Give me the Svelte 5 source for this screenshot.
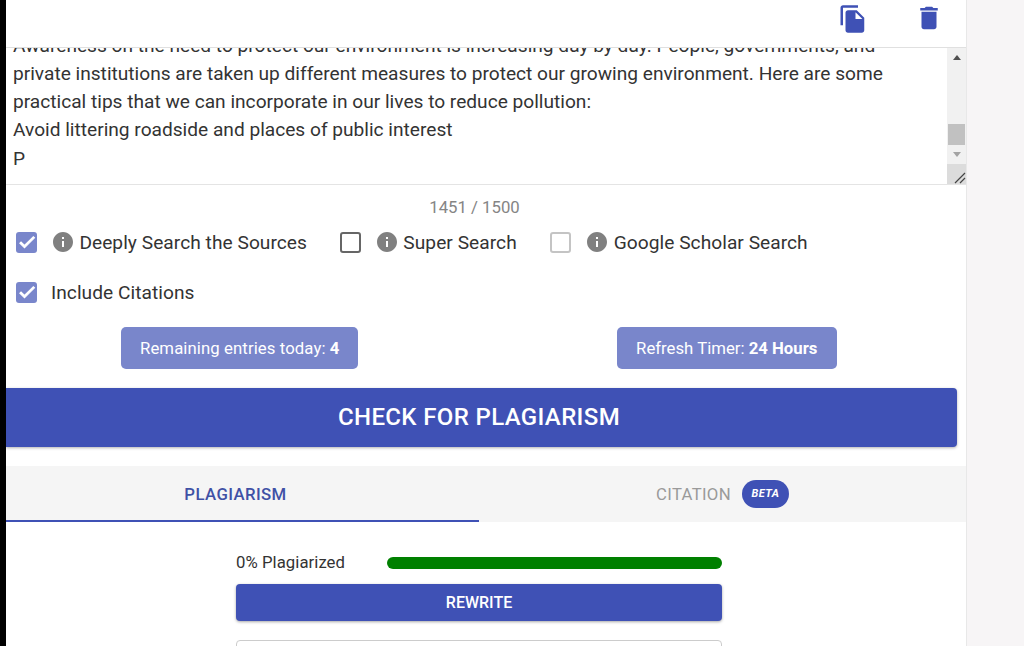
<script>
	const options = [
		{ label: 'Deeply Search the Sources', state: 'checked', gap: 33 },
		{ label: 'Super Search', state: 'empty', gap: 33.6 },
		{ label: 'Google Scholar Search', state: 'disabled', gap: 0 }
	];
	const lines = [
		'Awareness on the need to protect our environment is increasing day by day. People, governments, and',
		'private institutions are taken up different measures to protect our growing environment. Here are some',
		'practical tips that we can incorporate in our lives to reduce pollution:',
		'Avoid littering roadside and places of public interest',
		'P'
	];
</script>

{#snippet checkbox(state)}
	<span class="box {state}">
		{#if state === 'checked'}
			<svg viewBox="0 0 24 24" width="20" height="20"><path d="M9 16.17 4.83 12l-1.42 1.41L9 19 21 7l-1.41-1.41z" fill="#fff" stroke="#fff" stroke-width="1.3" /></svg>
		{/if}
	</span>
{/snippet}

<div class="page">
	<div class="rail"></div>
	<main class="panel">
		<header class="toolbar">
			<button class="icon copy" aria-label="Copy">
				<svg viewBox="0 0 24 24" width="30" height="30"><path d="M16 1H4c-1.1 0-2 .9-2 2v14h2V3h12V1zm-1 4l6 6v10c0 1.1-.9 2-2 2H7.99C6.89 23 6 22.1 6 21l.01-14c0-1.1.89-2 1.99-2h7zm-1 7h5.5L14 6.5V12z" /></svg>
			</button>
			<button class="icon trash" aria-label="Delete">
				<svg viewBox="0 0 24 24" width="30" height="30"><path d="M6 19c0 1.1.9 2 2 2h8c1.1 0 2-.9 2-2V7H6v12zM19 4h-3.5l-1-1h-5l-1 1H5v2h14V4z" /></svg>
			</button>
		</header>

		<div class="editor">
			<div class="text">
				{#each lines as line}
					<p>{line}</p>
				{/each}
			</div>
			<div class="scrollbar">
				<span class="arrow up"></span>
				<span class="thumb"></span>
				<span class="arrow down"></span>
				<span class="resizer">
					<svg viewBox="0 0 12 12" width="12" height="12"><path d="M1 11 11 1M6 11l5-5" stroke="#444" stroke-width="1.2" fill="none" /></svg>
				</span>
			</div>
		</div>

		<div class="counter">1451 / 1500</div>

		<div class="options">
			{#each options as opt}
				<label class="option" style="margin-right: {opt.gap}px">
					{@render checkbox(opt.state)}
					<svg class="info" viewBox="0 0 24 24" width="24" height="24"><path d="M12 2C6.48 2 2 6.48 2 12s4.48 10 10 10 10-4.48 10-10S17.52 2 12 2zm1 15h-2v-6h2v6zm0-8h-2V7h2v2z" /></svg>
					<span class="label">{opt.label}</span>
				</label>
			{/each}
		</div>
		<div class="options second">
			<label class="option">
				{@render checkbox('checked')}
				<span class="label plain">Include Citations</span>
			</label>
		</div>

		<div class="limits">
			<div class="chip first">Remaining entries today: <b>4</b></div>
			<div class="chip last">Refresh Timer: <b>24 Hours</b></div>
		</div>

		<button class="check">CHECK FOR PLAGIARISM</button>

		<nav class="tabs">
			<div class="tab active">PLAGIARISM</div>
			<div class="tab">CITATION <span class="beta">BETA</span></div>
		</nav>

		<section class="result">
			<div class="score">
				<span>0% Plagiarized</span>
				<div class="bar"></div>
			</div>
			<button class="rewrite">REWRITE</button>
			<div class="output"></div>
		</section>
	</main>
</div>

<style>
	:global(body) {
		background: #f7f5f6;
		font-family: Roboto, 'Liberation Sans', sans-serif;
		color: #212121;
	}
	button {
		font-family: inherit;
		border: none;
		cursor: pointer;
	}
	.page {
		display: flex;
		height: 646px;
		overflow: hidden;
	}
	.rail {
		width: 6px;
		background: #000;
		flex: none;
	}
	.panel {
		width: 960px;
		flex: none;
		background: #fff;
		border-right: 1px solid #e8e8e8;
	}

	.toolbar {
		height: 47px;
		border-bottom: 1px solid #e0e0e0;
		display: flex;
		align-items: flex-start;
	}
	.icon {
		background: none;
		padding: 0;
		display: flex;
		fill: #3f51b5;
	}
	.copy {
		margin: 4px 0 0 832px;
	}
	.trash {
		margin: 3px 0 0 46px;
	}

	.editor {
		height: 136px;
		border-bottom: 1px solid #e4e4e4;
		display: flex;
		overflow: hidden;
	}
	.text {
		flex: 1;
		margin-top: -16px;
		padding-left: 7px;
		font-size: 19.14px;
		line-height: 28.12px;
		color: #333;
		white-space: nowrap;
	}
	.text p {
		margin: 0;
	}
	.scrollbar {
		width: 19px;
		background: #f1f1f1;
		display: flex;
		flex-direction: column;
		align-items: center;
		position: relative;
	}
	.arrow {
		width: 0;
		height: 0;
		border-left: 4.5px solid transparent;
		border-right: 4.5px solid transparent;
	}
	.arrow.up {
		margin-top: 7px;
		border-bottom: 5px solid #505050;
	}
	.thumb {
		width: 17px;
		height: 21px;
		margin-top: 64px;
		background: #c1c1c1;
	}
	.arrow.down {
		margin-top: 7px;
		border-top: 5px solid #a3a3a3;
	}
	.resizer {
		position: absolute;
		right: 0;
		bottom: 0;
		width: 19px;
		height: 20px;
		background: #dcdcdc;
		display: flex;
		align-items: flex-end;
		justify-content: flex-end;
	}

	.counter {
		height: 43px;
		line-height: 44px;
		padding-right: 23px;
		text-align: center;
		font-size: 16.74px;
		color: #858585;
	}

	.options {
		display: flex;
		padding-left: 10px;
		height: 28px;
		align-items: center;
	}
	.options.second {
		margin-top: 22px;
	}
	.option {
		display: flex;
		align-items: center;
	}
	.box {
		width: 21px;
		height: 21px;
		box-sizing: border-box;
		border-radius: 3px;
		display: flex;
		align-items: center;
		justify-content: center;
	}
	.box.checked {
		background: #7986cb;
	}
	.box.empty {
		border: 2px solid #666;
	}
	.box.disabled {
		border: 2px solid #c4c4c4;
	}
	.info {
		fill: #808080;
		margin-left: 14px;
	}
	.label {
		margin-left: 4.4px;
		font-size: 19.14px;
		letter-spacing: 0.05px;
		color: #333;
	}
	.label.plain {
		margin-left: 14px;
	}

	.limits {
		display: flex;
		margin-top: 21px;
		padding-left: 115px;
	}
	.chip {
		height: 42px;
		line-height: 43px;
		padding: 0 19px;
		border-radius: 5px;
		background: #7986cb;
		color: #fff;
		font-size: 16.74px;
		letter-spacing: 0.09px;
	}
	.chip.first {
		margin-right: 258.6px;
	}
	.chip.last {
		letter-spacing: 0;
		padding-right: 19.5px;
	}
	.chip b {
		font-weight: 700;
	}

	.check {
		display: block;
		width: 951px;
		height: 59px;
		margin-top: 19px;
		padding: 0 5px 2px 0;
		background: #3f51b5;
		color: #fff;
		font-size: 24px;
		font-weight: 500;
		letter-spacing: 0.36px;
		border-radius: 0 4px 4px 0;
		box-shadow: 0 1px 3px rgba(0, 0, 0, 0.3);
	}

	.tabs {
		display: flex;
		height: 56px;
		margin-top: 19px;
		background: #f5f5f5;
	}
	.tab {
		width: 473px;
		box-sizing: border-box;
		display: flex;
		align-items: center;
		justify-content: center;
		font-size: 16.74px;
		font-weight: 500;
		letter-spacing: 0.4px;
		color: #9a9a9a;
	}
	.tab + .tab {
		flex: 1;
		font-weight: 400;
		letter-spacing: 0.3px;
	}
	.tab.active {
		color: #3f51a5;
		border-bottom: 2px solid #3f51b5;
		padding: 2px 14px 0 0;
	}
	.beta {
		width: 47px;
		height: 28px;
		margin-left: 11px;
		border-radius: 14px;
		background: #3f51b5;
		color: #fff;
		font-size: 11px;
		font-weight: 700;
		font-style: italic;
		letter-spacing: 0.4px;
		line-height: 28px;
		text-align: center;
	}

	.result {
		width: 486px;
		margin: 0 0 0 230px;
	}
	.score {
		display: flex;
		align-items: center;
		height: 20px;
		margin-top: 30px;
		font-size: 16.74px;
		letter-spacing: 0.05px;
		color: #333;
	}
	.bar {
		margin: 2px 0 0 auto;
		width: 335px;
		height: 12px;
		border-radius: 6px;
		background: #008000;
	}
	.rewrite {
		display: block;
		width: 100%;
		height: 37px;
		margin-top: 12px;
		padding: 0;
		background: #3f51b5;
		color: #fff;
		font-size: 16px;
		font-weight: 500;
		border-radius: 4px;
		box-shadow: 0 1px 3px rgba(0, 0, 0, 0.35);
	}
	.output {
		height: 40px;
		margin-top: 19px;
		border: 1px solid #ccc;
		border-radius: 4px;
		box-sizing: border-box;
	}
</style>
